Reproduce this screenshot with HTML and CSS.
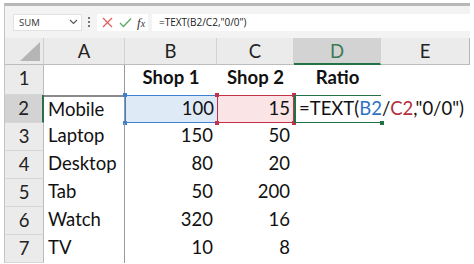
FILE: index.html
```html
<html>

<head>
    <meta charset="UTF-8">
    <link rel="stylesheet" href="styles.css">
</head>

<body>
    <div class="frame">
        <div class="toolbar">
            <div class="name-box">
                <span class="name-text">SUM</span>
                <svg class="chevron" width="9" height="6" viewBox="0 0 9 6">
                    <path d="M1 1 L4.5 4.5 L8 1" fill="none" stroke="#555" stroke-width="1.1" />
                </svg>
            </div>
            <div class="grip"><i></i><i></i><i></i></div>
            <div class="fx-box">
                <svg class="icon-cancel" width="11" height="11" viewBox="0 0 11 11">
                    <path d="M1 1 L10 10 M10 1 L1 10" stroke="#e06060" stroke-width="1.3" />
                </svg>
                <svg class="icon-enter" width="13" height="11" viewBox="0 0 13 11">
                    <path d="M1 6 L4.5 9.5 L12 1.5" fill="none" stroke="#5fa865" stroke-width="1.3" />
                </svg>
                <span class="fx">f<span class="fx-sub">x</span></span>
            </div>
            <div class="formula">=TEXT(B2/C2,"0/0")</div>
        </div>

        <div class="sheet">
            <!-- column headers -->
            <div class="corner"><div class="corner-tri"></div></div>
            <div class="col-head">A</div>
            <div class="col-head">B</div>
            <div class="col-head">C</div>
            <div class="col-head col-head-active">D</div>
            <div class="col-head col-head-last">E</div>

            <!-- row 1 -->
            <div class="row-head">1</div>
            <div class="cell col-a"></div>
            <div class="cell strong center">Shop 1</div>
            <div class="cell strong center">Shop 2</div>
            <div class="cell strong center">Ratio</div>
            <div class="cell"></div>

            <!-- row 2 -->
            <div class="row-head row-head-active">2</div>
            <div class="cell col-a col-a-top">Mobile</div>
            <div class="cell num ref ref-blue">100
                <span class="handle h-tl"></span><span class="handle h-bl"></span>
            </div>
            <div class="cell num ref ref-red">15
                <span class="handle h-tl"></span><span class="handle h-bl"></span>
                <span class="handle h-tr"></span><span class="handle h-br"></span>
            </div>
            <div class="cell editing">
                <span class="edit-text">=TEXT(<span class="ref-b">B2</span>/<span class="ref-c">C2</span>,"0/0")</span>
                <span class="handle h-br handle-green"></span>
            </div>
            <div class="cell"></div>

            <!-- row 3 -->
            <div class="row-head">3</div>
            <div class="cell col-a">Laptop</div>
            <div class="cell num">150</div>
            <div class="cell num">50</div>
            <div class="cell"></div>
            <div class="cell"></div>

            <!-- row 4 -->
            <div class="row-head">4</div>
            <div class="cell col-a">Desktop</div>
            <div class="cell num">80</div>
            <div class="cell num">20</div>
            <div class="cell"></div>
            <div class="cell"></div>

            <!-- row 5 -->
            <div class="row-head">5</div>
            <div class="cell col-a">Tab</div>
            <div class="cell num">50</div>
            <div class="cell num">200</div>
            <div class="cell"></div>
            <div class="cell"></div>

            <!-- row 6 -->
            <div class="row-head">6</div>
            <div class="cell col-a">Watch</div>
            <div class="cell num">320</div>
            <div class="cell num">16</div>
            <div class="cell"></div>
            <div class="cell"></div>

            <!-- row 7 -->
            <div class="row-head">7</div>
            <div class="cell col-a">TV</div>
            <div class="cell num">10</div>
            <div class="cell num">8</div>
            <div class="cell"></div>
            <div class="cell"></div>
        </div>
    </div>
</body>

</html>
```

FILE: styles.css
```css
body {
    margin: 0;
    background: #ffffff;
    font-family: "Lato", "Open Sans", sans-serif;
}

.frame {
    margin: 3px 0 0 4px;
    width: 465px;
    border-top: 3px solid #b8b8b8;
    border-left: 1px solid #c4c4c4;
    background: #f3f3f3;
}

/* formula bar */
.toolbar {
    display: flex;
    align-items: center;
    height: 29px;
    padding: 3px 0 0 8px;
    box-sizing: border-box;
}

.name-box {
    display: flex;
    align-items: center;
    justify-content: space-between;
    width: 69px;
    height: 17px;
    background: white;
    border: 1px solid #e2e2e2;
    box-sizing: border-box;
    padding: 0 3px 0 5px;
}

.name-text {
    font-family: "Open Sans", sans-serif;
    font-size: 9.5px;
    color: #333333;
}

.grip {
    display: flex;
    flex-direction: column;
    gap: 2px;
    margin: 0 7px 0 6px;
}

.grip i {
    width: 2px;
    height: 2px;
    background: #777777;
}

.fx-box {
    display: flex;
    align-items: center;
    width: 51px;
    height: 17px;
    background: white;
    padding-left: 5px;
    box-sizing: border-box;
}

.icon-cancel {
    margin-right: 6px;
}

.icon-enter {
    margin-right: 5px;
}

.fx {
    font-family: "Liberation Serif", serif;
    font-style: italic;
    font-size: 13px;
    color: #333333;
    line-height: 1;
}

.fx-sub {
    font-size: 10px;
}

.formula {
    flex: 1;
    height: 17px;
    margin-left: 4px;
    background: white;
    font-family: "Open Sans", sans-serif;
    font-size: 10px;
    line-height: 17px;
    padding-left: 7px;
    color: #222222;
}

/* sheet */
.sheet {
    display: grid;
    grid-template-columns: 39px 81px 92px 77px 87px 89px;
    grid-template-rows: 27px 30px repeat(6, 28px);
    margin-top: 3px;
    background: white;
    font-size: 18.5px;
}

.corner,
.col-head,
.row-head {
    background: #ebebeb;
    color: #222222;
    box-sizing: border-box;
}

.corner {
    position: relative;
    border-right: 1px solid #cfcfcf;
    border-bottom: 1px solid #bcbcbc;
}

.corner-tri {
    position: absolute;
    right: 3px;
    bottom: 3px;
    width: 0;
    height: 0;
    border-left: 20px solid transparent;
    border-bottom: 19px solid #b5b5b5;
}

.col-head {
    text-align: center;
    line-height: 26px;
    border-right: 1px solid #d2d2d2;
    border-bottom: 1px solid #bcbcbc;
}

.col-head-last {
    border-right: 1px solid #b8b8b8;
}

.col-head-active {
    background: #d3d3d3;
    color: #3d7a56;
    border-bottom: 2px solid #217346;
}

.row-head {
    text-align: center;
    line-height: 26px;
    border-right: 1px solid #bcbcbc;
    border-bottom: 1px solid #d6d6d6;
}

.row-head-active {
    background: #d3d3d3;
    border-right: 2px solid #2f6e48;
}

.cell {
    position: relative;
    line-height: 25px;
    padding: 0 4px;
    box-sizing: border-box;
    white-space: nowrap;
    color: #111111;
}

.col-a {
    border-right: 1px solid #999999;
}

.col-a-top {
    border-top: 2px solid #8a8a8a;
}

.strong {
    font-weight: bold;
}

.center {
    text-align: center;
}

.num {
    text-align: right;
}

.ref {
    padding-right: 3px;
}

.ref-blue {
    background: #dfeaf7;
    border: 1px solid #3e7fd0;
    border-right: none;
}

.ref-red {
    background: #fbe4e6;
    border: 1px solid #c4314b;
}

.handle {
    position: absolute;
    width: 4px;
    height: 4px;
    background: #3e7fd0;
}

.ref-red .handle {
    background: #c4314b;
}

.handle-green {
    background: #217346;
}

.h-tl {
    left: -3px;
    top: -3px;
}

.h-bl {
    left: -3px;
    bottom: -3px;
}

.h-tr {
    right: -3px;
    top: -3px;
}

.h-br {
    right: -3px;
    bottom: -3px;
}

.editing {
    padding-left: 3px;
    border: 1px solid #217346;
    border-left: 2px solid #217346;
    border-right: none;
    overflow: visible;
}

.edit-text {
    position: relative;
    z-index: 1;
    background: white;
    padding-right: 2px;
}

.ref-b {
    color: #2f72c4;
}

.ref-c {
    color: #b3303d;
}
```
